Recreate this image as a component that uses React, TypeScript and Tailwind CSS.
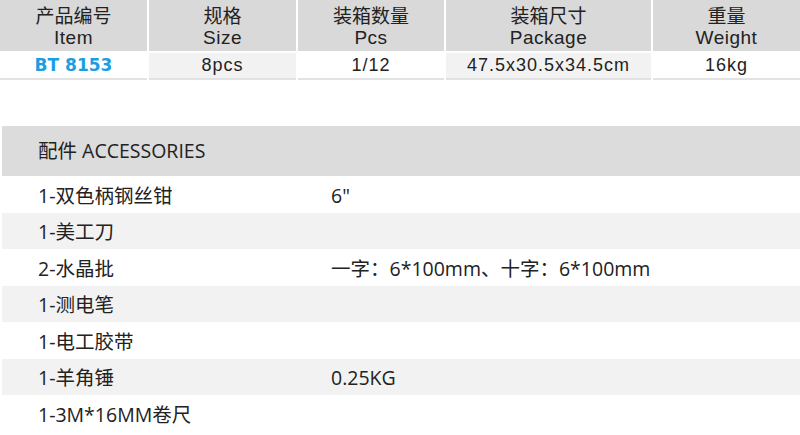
import React from "react";

type Spec = { zh: string; en: string; value: string };

const specs: Spec[] = [
  { zh: "产品编号", en: "Item", value: "BT 8153" },
  { zh: "规格", en: "Size", value: "8pcs" },
  { zh: "装箱数量", en: "Pcs", value: "1/12" },
  { zh: "装箱尺寸", en: "Package", value: "47.5x30.5x34.5cm" },
  { zh: "重量", en: "Weight", value: "16kg" },
];

const accessories: [string, string][] = [
  ["1-双色柄钢丝钳", '6"'],
  ["1-美工刀", ""],
  ["2-水晶批", "一字：6*100mm、十字：6*100mm"],
  ["1-测电笔", ""],
  ["1-电工胶带", ""],
  ["1-羊角锤", "0.25KG"],
  ["1-3M*16MM卷尺", ""],
];

const headFont = "font-['Liberation_Sans','Noto_Sans_CJK_SC',sans-serif]";
const bodyFont = "font-['Open_Sans','Noto_Sans_CJK_SC',sans-serif]";

export default function App() {
  return (
    <div className="h-[435px] w-[800px] overflow-hidden bg-white text-[#222]">
      {/* spec table */}
      <div className={`grid grid-cols-[147px_147px_146px_205px_147px] gap-x-[2px] ${headFont}`}>
        {specs.map((s) => (
          <div key={s.en} className="flex h-[51px] flex-col items-center justify-center bg-[#d9d9d9] text-[19px] leading-[23px]">
            <span className="font-['Noto_Sans_CJK_SC',sans-serif]">{s.zh}</span>
            <span className="tracking-[0.5px]">{s.en}</span>
          </div>
        ))}
        {specs.map((s, i) => (
          <div
            key={s.value}
            className={`mt-[2px] flex h-[27px] items-center justify-center border-b-2 border-[#e2e2e2] text-[18px] tracking-[1px] ${
              i % 2 === 1 ? "bg-[#f2f2f2]" : "bg-white"
            }`}
          >
            {i === 0 ? (
              <span className="font-['DejaVu_Sans',sans-serif] text-[17px] font-bold tracking-normal text-[#1a9ee3]">{s.value}</span>
            ) : (
              s.value
            )}
          </div>
        ))}
      </div>

      {/* accessories */}
      <div className={`ml-[2px] mt-[46px] ${bodyFont} text-[19.5px]`}>
        <div className="flex h-[50px] items-center bg-[#dcdcdc] pl-[36px]">配件 ACCESSORIES</div>
        {accessories.map(([name, spec], i) => (
          <div
            key={name}
            className={`grid h-[36.5px] grid-cols-[293px_1fr] items-center pl-[36px] pt-[2px] ${i % 2 === 1 ? "bg-[#f2f2f2]" : "bg-white"}`}
          >
            <span>{name}</span>
            <span>{spec}</span>
          </div>
        ))}
      </div>
    </div>
  );
}
